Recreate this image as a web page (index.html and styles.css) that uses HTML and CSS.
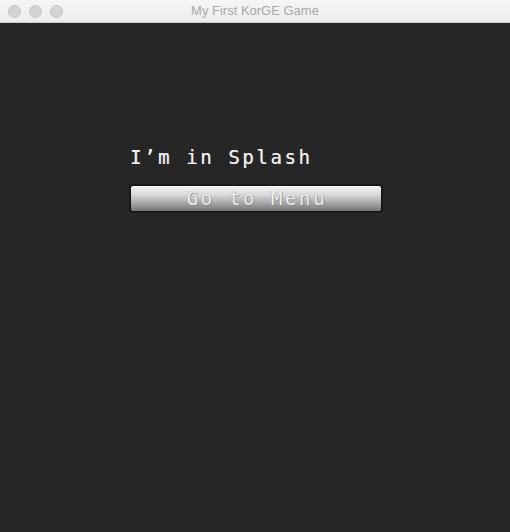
FILE: index.html
```html
<!DOCTYPE html>
<html>
<head>
<meta charset="utf-8">
<link rel="stylesheet" href="styles.css">
</head>
<body>
<div class="window">
  <div class="titlebar">
    <div class="lights">
      <span class="light"></span>
      <span class="light"></span>
      <span class="light"></span>
    </div>
    <div class="title">My First KorGE Game</div>
  </div>
  <div class="stage">
    <div class="label">I’m in Splash</div>
    <button class="btn">Go to Menu</button>
  </div>
</div>
</body>
</html>
```
FILE: styles.css
```css
html, body {
  margin: 0;
  padding: 0;
  background: #262626;
}
.window {
  width: 510px;
  height: 532px;
  display: flex;
  flex-direction: column;
  background: #262626;
}
.titlebar {
  height: 22px;
  flex: none;
  background: linear-gradient(#f6f6f6, #ececec);
  border-bottom: 1px solid #c9c9c9;
  display: grid;
  grid-template-columns: 1fr;
  align-items: center;
}
.lights {
  grid-area: 1 / 1;
  display: flex;
  gap: 8px;
  padding-left: 8px;
}
.light {
  width: 11px;
  height: 11px;
  border-radius: 50%;
  background: #d4d4d4;
  border: 0.5px solid #c6c6c6;
}
.title {
  grid-area: 1 / 1;
  text-align: center;
  font-family: "Liberation Sans", Arial, sans-serif;
  font-size: 13px;
  color: #a8a8a8;
  line-height: 22px;
}
.stage {
  flex: 1;
  padding: 124px 0 0 130px;
  display: flex;
  flex-direction: column;
  align-items: flex-start;
  gap: 18px;
}
.label {
  font-family: "DejaVu Sans Mono", "Liberation Mono", monospace;
  font-size: 19px;
  line-height: 20px;
  letter-spacing: 2.6px;
  color: #f2f2f2;
  text-shadow: 0.4px 0 0 rgba(242,242,242,0.6);
}
.btn {
  width: 252px;
  height: 27px;
  margin: 0;
  padding: 0 0 0 2px;
  border: 1px solid #141414;
  border-radius: 3px;
  background: linear-gradient(#f2f2f2 0%, #dadada 35%, #a4a4a4 70%, #747474 100%);
  box-shadow: inset 0 1px 0 rgba(255,255,255,0.6), 0 0 0 1px rgba(0,0,0,0.25);
  font-family: "DejaVu Sans Mono", "Liberation Mono", monospace;
  font-size: 19px;
  line-height: 25px;
  letter-spacing: 2.6px;
  color: #eeeeee;
  text-shadow: 0 0 1px #888888, 1px 1px 0 rgba(120,120,120,0.5);
  text-align: center;
}
```
